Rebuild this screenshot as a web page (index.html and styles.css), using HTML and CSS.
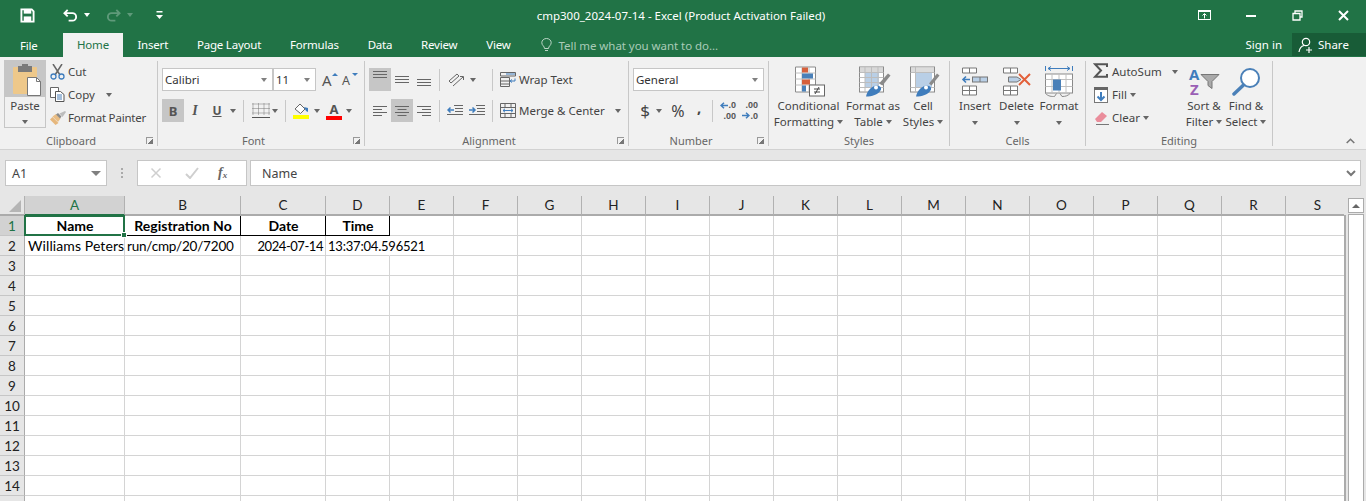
FILE: index.html
```html
<!DOCTYPE html>
<html lang="en">
<head>
<meta charset="utf-8">
<title>cmp300_2024-07-14 - Excel</title>
<link rel="stylesheet" href="styles.css">
</head>
<body>
<div class="app">
  <header class="titlebar">
    <div class="qat">
      <svg class="q-save" width="15" height="15" viewBox="0 0 16 16"><path d="M1.500 1.500h11l2 2v11h-13z" fill="none" stroke="#fff" stroke-width="2"/><rect x="4" y="1" width="8" height="5" fill="#fff"/><rect x="4" y="9" width="8" height="6" fill="#fff"/></svg>
      <svg class="q-undo" width="15" height="14" viewBox="0 0 16 14"><path d="M5 1.500 1.500 5 5 8.500M2 5h8a4 4 0 0 1 0 8H6" fill="none" stroke="#fff" stroke-width="2"/></svg>
      <span class="caret caret-white q-c1"></span>
      <svg class="q-redo" width="15" height="14" viewBox="0 0 16 14"><path d="M11 1.500 14.500 5 11 8.500M14 5H6a4 4 0 0 0 0 8h4" fill="none" stroke="#5f9a7a" stroke-width="2"/></svg>
      <span class="caret caret-dim q-c2"></span>
      <svg class="q-more" width="7" height="9" viewBox="0 0 7 9"><rect x="0.500" y="0" width="6" height="1.500" fill="#fff"/><path d="M0 4h7L3.500 8z" fill="#fff"/></svg>
    </div>
    <div class="doc-title">cmp300_2024-07-14 - Excel (Product Activation Failed)</div>
    <div class="winctl">
      <svg width="13" height="10" viewBox="0 0 13 10"><rect x="0.500" y="0.500" width="12" height="9" fill="none" stroke="#fff"/><rect x="1" y="0.500" width="11" height="1.500" fill="#fff"/><path d="M6.500 8.500V4M4.500 5.500l2-2 2 2" fill="none" stroke="#fff"/></svg>
      <svg class="w-min" width="10" height="2" viewBox="0 0 10 2"><rect width="10" height="2" fill="#fff"/></svg>
      <svg class="w-rest" width="11" height="11" viewBox="0 0 11 11"><path d="M3 3V1h7v6H8M1 3.500h7v6.500H1z" fill="none" stroke="#fff" stroke-width="1.300"/></svg>
      <svg class="w-close" width="11" height="11" viewBox="0 0 11 11"><path d="M1 1l9 9M10 1l-9 9" stroke="#fff" stroke-width="2"/></svg>
    </div>
  </header>

  <nav class="tabs">
    <span class="tab tab-file">File</span>
    <span class="tab tab-active">Home</span>
    <span class="tab">Insert</span>
    <span class="tab">Page Layout</span>
    <span class="tab">Formulas</span>
    <span class="tab">Data</span>
    <span class="tab">Review</span>
    <span class="tab">View</span>
    <span class="tellme">
      <svg width="11" height="14" viewBox="0 0 11 14"><path d="M3.500 10.500C3.500 8 .8 7.500.8 4.700a4.700 4.200 0 0 1 9.400 0C10.200 7.500 7.500 8 7.500 10.500zM4 12.500h3" fill="none" stroke="#bcd6c7"/></svg>
      Tell me what you want to do...
    </span>
    <span class="signin">Sign in</span>
    <span class="share">
      <svg width="16" height="16" viewBox="0 0 16 16"><circle cx="8" cy="5" r="3.700" fill="none" stroke="#fff" stroke-width="1.200"/><path d="M1 15c.5-3.500 2.500-6 5-6.500M11 10v6M8 13h6" fill="none" stroke="#fff" stroke-width="1.200"/></svg>
      Share
    </span>
  </nav>

  <section class="ribbon">
    <div class="group g-clip launch">
      <div class="g-body clip-body">
        <div class="paste">
          <div class="paste-top">
            <svg width="30" height="32" viewBox="0 0 30 32"><rect x="1" y="3" width="24" height="27" rx="1" fill="#eec88a"/><rect x="6" y="2" width="14" height="6" fill="#7a7a7a"/><rect x="10" y="0" width="6" height="3" fill="#7a7a7a"/><path d="M15.500 13.500h9l4 4v14h-13z" fill="#fff" stroke="#777"/><path d="M24.500 13.500v4h4" fill="none" stroke="#777"/></svg>
          </div>
          <div class="paste-bottom"><span>Paste</span><span class="caret"></span></div>
        </div>
        <div class="small-col">
          <div class="small-row">
            <svg width="15" height="16" viewBox="0 0 15 16"><path d="M3 0l7 11M12 0 5 11" stroke="#666" stroke-width="1.500" fill="none"/><circle cx="3.500" cy="12.500" r="2.500" fill="none" stroke="#3f7dbd" stroke-width="1.300"/><circle cx="11.500" cy="12.500" r="2.500" fill="none" stroke="#3f7dbd" stroke-width="1.300"/></svg>
            <span class="lbl-cut">Cut</span>
          </div>
          <div class="small-row">
            <svg width="15" height="15" viewBox="0 0 15 15"><path d="M.5.500h8v10h-8z" fill="#fff" stroke="#666"/><path d="M5.500 4.500h5l3.500 3v7H5.500z" fill="#fff" stroke="#555"/><path d="M7 8h5M7 10h5M7 12h5" stroke="#4a7fb8"/></svg>
            <span class="lbl-cut">Copy</span><span class="caret copy-caret"></span>
          </div>
          <div class="small-row">
            <svg width="16" height="14" viewBox="0 0 16 14"><path d="M0 8.500 2.500 6l6 6-3 2z" fill="#e6b77c"/><path d="M2.500 5.500 6 3l4.500 4.500L8 11z" fill="#e9bd84"/><path d="M6 3.500 8 2l3.500 3.500L10 7.500z" fill="#8a8a8a"/><path d="M9.500 2.500 15 0l1 1-3.500 5z" fill="#bcbcbc"/></svg>
            <span class="lbl-fp">Format Painter</span>
          </div>
        </div>
      </div>
      <div class="g-label">Clipboard</div>
      <span class="launcher"></span>
    </div>

    <div class="group g-font launch">
      <div class="g-body rows">
        <div class="r-row">
          <div class="combo combo-font"><span>Calibri</span><span class="caret"></span></div>
          <div class="combo combo-size"><span>11</span><span class="caret"></span></div>
          <span class="grow-a">A<i class="tri-up"></i></span>
          <span class="shrink-a">A<i class="tri-down"></i></span>
        </div>
        <div class="r-row">
          <span class="fbtn fbtn-on f-b">B</span>
          <span class="fbtn f-i">I</span>
          <span class="fbtn f-u">U</span>
          <span class="caret cr-u"></span>
          <i class="vsep sep-u"></i>
          <svg class="ic-border" width="18" height="16" viewBox="0 0 18 16"><path d="M.5 1h17M.5 5.500h17M.5 10h17M1 .5v11M6.500.5v11M12 .5v11M17 .5v11" stroke="#777" stroke-dasharray="1 1" fill="none"/><path d="M0 14.500h18" stroke="#555"/></svg>
          <span class="caret cr-b"></span>
          <i class="vsep sep-b"></i>
          <svg class="ic-fill" width="17" height="17" viewBox="0 0 17 17"><path d="M2 7l5-5 5 5-4.500 4.500z" fill="#fff" stroke="#666"/><path d="M11 5l4 1v4l-2-1z" fill="#3f7dbd"/><rect y="13" width="16" height="4" fill="#ffff00"/></svg>
          <span class="caret cr-f"></span>
          <span class="ic-color">A</span>
          <span class="caret cr-c"></span>
        </div>
      </div>
      <div class="g-label">Font</div>
      <span class="launcher"></span>
    </div>

    <div class="group g-align launch">
      <div class="g-body rows">
        <div class="r-row">
          <span class="abtn abtn-on abtn-top"><svg width="14" height="8" viewBox="0 0 14 8"><path d="M0 .5h14M0 3.500h14M0 6.500h14" stroke="#666"/></svg></span>
          <span class="abtn"><svg width="14" height="8" viewBox="0 0 14 8"><path d="M0 .5h14M0 3.500h14M0 6.500h14" stroke="#666"/></svg></span>
          <span class="abtn abtn-low"><svg width="14" height="8" viewBox="0 0 14 8"><path d="M0 .5h14M0 3.500h14M0 6.500h14" stroke="#666"/></svg></span>
          <i class="vsep sep-a1"></i>
          <span class="orient"><svg width="18" height="15" viewBox="0 0 18 15"><path d="M2 9l8-7 2 2-8 7z" fill="none" stroke="#666"/><path d="M6 14 16 5M13 4.500l3.500 0V8" fill="none" stroke="#666"/></svg><span class="caret"></span></span>
          <i class="vsep"></i>
          <span class="wide-btn">
            <svg width="16" height="15" viewBox="0 0 16 15"><path d="M.5.500h15v3.500H.5zM.5 5.500h9v9H.5zM.5 9h9M.5 12h9" fill="none" stroke="#666"/><path d="M15 6.500v2.500H10.500M12 7.500 10 9l2 1.500" fill="none" stroke="#3f7dbd"/><path d="M6 2h9" stroke="#3f7dbd"/></svg>
            Wrap Text
          </span>
        </div>
        <div class="r-row">
          <span class="abtn"><svg width="14" height="10" viewBox="0 0 14 10"><path d="M0 .5h14M0 3.500h9M0 6.500h14M0 9.500h9" stroke="#666"/></svg></span>
          <span class="abtn abtn-on"><svg width="14" height="10" viewBox="0 0 14 10"><path d="M0 .5h14M2.500 3.500h9M0 6.500h14M2.500 9.500h9" stroke="#666"/></svg></span>
          <span class="abtn"><svg width="14" height="10" viewBox="0 0 14 10"><path d="M0 .5h14M5 3.500h9M0 6.500h14M5 9.500h9" stroke="#666"/></svg></span>
          <i class="vsep sep-a1"></i>
          <span class="indent ind-first"><svg width="16" height="11" viewBox="0 0 16 11"><path d="M7 .5h9M8 3.500h8M8 6.500h8M0 9.500h16" stroke="#666"/><path d="M7 5H1M3.500 2.500 1 5l2.500 2.500" fill="none" stroke="#3f7dbd" stroke-width="1.500"/></svg></span>
          <span class="indent"><svg width="16" height="11" viewBox="0 0 16 11"><path d="M7 .5h9M8 3.500h8M8 6.500h8M0 9.500h16" stroke="#666"/><path d="M0 5h6M3.500 2.500 6 5 3.500 7.500" fill="none" stroke="#3f7dbd" stroke-width="1.500"/></svg></span>
          <i class="vsep"></i>
          <span class="wide-btn">
            <svg width="16" height="15" viewBox="0 0 16 15"><path d="M.5.500h15v14H.5zM.5 4.500h15M.5 10.500h15M5 .5v4M11 .5v4M5 10.500v4M11 10.500v4" fill="none" stroke="#666"/><path d="M3 7.500h10M5 5.800 3 7.500l2 1.700M11 5.800l2 1.700-2 1.700" fill="none" stroke="#3f7dbd"/></svg>
            Merge &amp; Center<span class="caret cr-merge"></span>
          </span>
        </div>
      </div>
      <div class="g-label">Alignment</div>
      <span class="launcher"></span>
    </div>

    <div class="group g-num launch">
      <div class="g-body rows">
        <div class="r-row">
          <div class="combo combo-num"><span>General</span><span class="caret"></span></div>
        </div>
        <div class="r-row num-row">
          <span class="n-dollar">$</span><span class="caret cr-d"></span>
          <span class="n-pct">%</span>
          <span class="n-comma">,</span>
          <i class="vsep sep-n"></i>
          <span class="dec"><span>.0</span><span>.00</span><svg class="dec-arrow" width="8" height="7" viewBox="0 0 8 7"><path d="M8 3.500H1M4 .8 1 3.500l3 2.700" fill="none" stroke="#3f7dbd" stroke-width="1.500"/></svg></span>
          <span class="dec dec2"><span>.00</span><span>.0</span><svg class="dec-arrow da-r" width="8" height="7" viewBox="0 0 8 7"><path d="M0 3.500h7M4 .8l3 2.700-3 2.700" fill="none" stroke="#3f7dbd" stroke-width="1.500"/></svg></span>
        </div>
      </div>
      <div class="g-label">Number</div>
      <span class="launcher"></span>
    </div>

    <div class="group g-styles">
      <div class="g-body large-row">
        <div class="large b-cf">
          <svg width="30" height="30" viewBox="0 0 30 30"><path d="M.5.500h20v25H.5z" fill="#fff" stroke="#8a8a8a"/><path d="M7 .5v25M14 .5v25M.5 6.500h20M.5 12.500h20M.5 18.500h20" stroke="#c0c0c0"/><rect x="7" y="1" width="6" height="5" fill="#d5603c"/><rect x="7" y="7" width="11" height="5" fill="#4a80b8"/><rect x="7" y="13" width="8" height="5" fill="#d5603c"/><rect x="7" y="19" width="4" height="6" fill="#4a80b8"/><rect x="14.500" y="18.500" width="15" height="11" fill="#fff" stroke="#666"/><path d="M19 22.500h6M19 25.500h6M24 20.500l-4 7" stroke="#444" fill="none"/></svg>
          <span>Conditional</span>
          <span>Formatting<i class="caret c-in"></i></span>
        </div>
        <div class="large b-ft">
          <svg width="32" height="30" viewBox="0 0 32 30"><rect x=".5" y=".5" width="24" height="25" fill="#fff" stroke="#8a8a8a"/><rect x="1" y="1" width="23" height="5" fill="#d8d8d8"/><rect x="6" y="6" width="14" height="15" fill="#b9cfe6"/><path d="M6 .5v25M12.500 .5v25M19 .5v25M.5 6h24M.5 11h24M.5 16h24M.5 21h24" stroke="#bdbdbd"/><path d="M20 17 29 7l2.500 2-8 10z" fill="#8a8a8a"/><path d="M7 30c1-5 5-10 10-11 5 0 6 3 4.500 5C19 28 13 30 7 30z" fill="#3f7dbd"/><circle cx="17" cy="21" r="2" fill="#fff"/></svg>
          <span>Format as</span>
          <span>Table<i class="caret c-in"></i></span>
        </div>
        <div class="large b-cs">
          <svg width="30" height="30" viewBox="0 0 30 30"><rect x=".5" y=".5" width="24" height="25" fill="#fff" stroke="#8a8a8a"/><rect x="1" y="1" width="23" height="5" fill="#dcdcdc"/><rect x="6" y="6" width="16" height="15" fill="#b9cfe6"/><path d="M5.500 .5v25M.5 6h24M.5 21h24" stroke="#bdbdbd"/><path d="M19 17 27 7l2.500 2-8 10z" fill="#8a8a8a"/><path d="M6 30c1-5 5-10 10-11 5 0 6 3 4.500 5C18 28 12 30 6 30z" fill="#3f7dbd"/><circle cx="16" cy="21" r="2" fill="#fff"/></svg>
          <span>Cell</span>
          <span>Styles<i class="caret c-in"></i></span>
        </div>
      </div>
      <div class="g-label">Styles</div>
    </div>

    <div class="group g-cells">
      <div class="g-body large-row">
        <div class="large b-ins">
          <svg width="28" height="28" viewBox="0 0 28 28"><path d="M1.500.500h14v5h-14zM8.500.5v5M1.500 18.500h14v9h-14zM1.500 23h14M8.500 18.500v9" fill="#fff" stroke="#777"/><rect x="11.500" y="9.500" width="15" height="5" fill="#b9cfe6" stroke="#777"/><path d="M19 9.500v5" stroke="#777"/><path d="M9 12H2M5 9 2 12l3 3" fill="none" stroke="#3f7dbd" stroke-width="1.600"/></svg>
          <span>Insert</span>
          <span class="caret c-big"></span>
        </div>
        <div class="large b-del">
          <svg width="30" height="28" viewBox="0 0 30 28"><path d="M1.500.500h14v5h-14zM8.500.5v5M1.500 18.500h14v9h-14zM1.500 23h14M8.500 18.500v9" fill="#fff" stroke="#777"/><path d="M6.500 9.500h8.500l4 2.500-4 2.500H6.500z" fill="#b9cfe6" stroke="#777"/><path d="M17 6.500l11 11M28 6.500l-11 11" stroke="#e3603a" stroke-width="2"/></svg>
          <span>Delete</span>
          <span class="caret c-big"></span>
        </div>
        <div class="large b-fmt">
          <svg width="28" height="32" viewBox="0 0 28 32"><path d="M.5.500v5M27.500.5v5M3 3h22M6 1 3 3l3 2M22 1l3 2-3 2" fill="none" stroke="#3f7dbd"/><rect x=".5" y="8.500" width="27" height="19" fill="#fff" stroke="#8a8a8a"/><path d="M7 8.500v19M14 8.500v19M21 8.500v19M.5 14h27M.5 21h27" stroke="#c0c0c0"/><rect x="8" y="14" width="8" height="11" fill="#4a80b8"/><path d="M.5 28c3 3 6 3 9 3l2-3M15 28l2 3c4 0 6-1 8-3" fill="none" stroke="#8a8a8a"/></svg>
          <span>Format</span>
          <span class="caret c-big"></span>
        </div>
      </div>
      <div class="g-label">Cells</div>
    </div>

    <div class="group g-edit">
      <div class="g-body clip-body">
        <div class="small-col edit-col">
          <div class="small-row">
            <svg class="sigma" width="15" height="15" viewBox="0 0 15 15"><path d="M14 4V1.200H2L8 7.500 2 13.800h12V11" fill="none" stroke="#555" stroke-width="2"/></svg>
            <span>AutoSum</span><span class="caret cr-as"></span>
          </div>
          <div class="small-row">
            <svg width="15" height="16" viewBox="0 0 15 16"><rect x=".5" y=".5" width="13" height="15" fill="#fff" stroke="#777"/><rect x="0" y="0" width="14" height="3" fill="#666"/><path d="M7 5v8M3.500 9.500 7 13l3.500-3.500" fill="none" stroke="#3f7dbd" stroke-width="2"/></svg>
            <span>Fill</span><span class="caret c-in2"></span>
          </div>
          <div class="small-row">
            <svg width="15" height="14" viewBox="0 0 15 14"><path d="M1 8l7-7 5 4-6 6H3z" fill="#ea8d9b"/><path d="M2 13.500h13" stroke="#777"/></svg>
            <span>Clear</span><span class="caret c-in2"></span>
          </div>
        </div>
        <div class="large b-sort">
          <svg width="32" height="30" viewBox="0 0 32 30"><text x="1" y="13" class="sort-a">A</text><text x="2" y="28" class="sort-z">Z</text><path d="M13 8h18l-7 7v7l-4-3v-4z" fill="#aaa" stroke="#777"/></svg>
          <span>Sort &amp;</span>
          <span>Filter<i class="caret c-in"></i></span>
        </div>
        <div class="large b-find">
          <svg width="29" height="29" viewBox="0 0 29 29"><circle cx="18" cy="11" r="9" fill="#fff" stroke="#4a80b8" stroke-width="2"/><path d="M11.500 18 2 27" stroke="#4a80b8" stroke-width="3.500" stroke-linecap="round"/></svg>
          <span>Find &amp;</span>
          <span>Select<i class="caret c-in"></i></span>
        </div>
      </div>
      <div class="g-label">Editing</div>
    </div>

    <div class="collapse-wrap">
      <svg width="9" height="6" viewBox="0 0 9 6"><path d="M.7 5 4.500 1.300 8.300 5" fill="none" stroke="#777" stroke-width="1.600"/></svg>
    </div>
  </section>

  <section class="formula">
    <div class="namebox"><span>A1</span><span class="caret caret-grey"></span></div>
    <div class="fdots"><i></i><i></i><i></i></div>
    <div class="fxbox">
      <svg width="12" height="12" viewBox="0 0 12 12"><path d="M1.500 1.500l9 9M10.500 1.500l-9 9" stroke="#cfcfcf" stroke-width="1.500"/></svg>
      <svg width="14" height="12" viewBox="0 0 14 12"><path d="M1 7l4 4 8-10" fill="none" stroke="#cfcfcf" stroke-width="2"/></svg>
      <span class="fx">f<sub>x</sub></span>
    </div>
    <div class="finput">
      <span>Name</span>
      <svg width="10" height="7" viewBox="0 0 10 7"><path d="M1 1l4 4 4-4" fill="none" stroke="#777" stroke-width="2"/></svg>
    </div>
  </section>

  <section class="sheet">
    <div class="sheet-clip">
      <table class="grid">
        <colgroup>
          <col class="col-rh"><col class="col-a"><col class="col-b"><col class="col-c"><col class="col-std"><col class="col-std"><col class="col-std"><col class="col-std"><col class="col-std"><col class="col-std"><col class="col-std"><col class="col-std"><col class="col-std"><col class="col-std"><col class="col-std"><col class="col-std"><col class="col-std"><col class="col-std"><col class="col-std"><col class="col-std">
        </colgroup>
        <thead>
          <tr><th class="corner"><i class="corner-tri"></i></th><th class="ch ch-sel">A</th><th class="ch">B</th><th class="ch">C</th><th class="ch">D</th><th class="ch">E</th><th class="ch">F</th><th class="ch">G</th><th class="ch">H</th><th class="ch">I</th><th class="ch">J</th><th class="ch">K</th><th class="ch">L</th><th class="ch">M</th><th class="ch">N</th><th class="ch">O</th><th class="ch">P</th><th class="ch">Q</th><th class="ch">R</th><th class="ch">S</th></tr>
        </thead>
        <tbody>
          <tr><th class="rh rh-sel">1</th><td class="hd sel">Name<i class="handle"></i></td><td class="hd">Registration No</td><td class="hd">Date</td><td class="hd">Time</td><td></td><td></td><td></td><td></td><td></td><td></td><td></td><td></td><td></td><td></td><td></td><td></td><td></td><td></td><td></td></tr>
          <tr><th class="rh">2</th><td class="t-name">Williams Peters</td><td class="t-reg">run/cmp/20/7200</td><td class="num">2024-07-14</td><td class="spill">13:37:04.596521</td><td></td><td></td><td></td><td></td><td></td><td></td><td></td><td></td><td></td><td></td><td></td><td></td><td></td><td></td><td></td></tr>
          <tr><th class="rh">3</th><td></td><td></td><td></td><td></td><td></td><td></td><td></td><td></td><td></td><td></td><td></td><td></td><td></td><td></td><td></td><td></td><td></td><td></td><td></td></tr>
          <tr><th class="rh">4</th><td></td><td></td><td></td><td></td><td></td><td></td><td></td><td></td><td></td><td></td><td></td><td></td><td></td><td></td><td></td><td></td><td></td><td></td><td></td></tr>
          <tr><th class="rh">5</th><td></td><td></td><td></td><td></td><td></td><td></td><td></td><td></td><td></td><td></td><td></td><td></td><td></td><td></td><td></td><td></td><td></td><td></td><td></td></tr>
          <tr><th class="rh">6</th><td></td><td></td><td></td><td></td><td></td><td></td><td></td><td></td><td></td><td></td><td></td><td></td><td></td><td></td><td></td><td></td><td></td><td></td><td></td></tr>
          <tr><th class="rh">7</th><td></td><td></td><td></td><td></td><td></td><td></td><td></td><td></td><td></td><td></td><td></td><td></td><td></td><td></td><td></td><td></td><td></td><td></td><td></td></tr>
          <tr><th class="rh">8</th><td></td><td></td><td></td><td></td><td></td><td></td><td></td><td></td><td></td><td></td><td></td><td></td><td></td><td></td><td></td><td></td><td></td><td></td><td></td></tr>
          <tr><th class="rh">9</th><td></td><td></td><td></td><td></td><td></td><td></td><td></td><td></td><td></td><td></td><td></td><td></td><td></td><td></td><td></td><td></td><td></td><td></td><td></td></tr>
          <tr><th class="rh">10</th><td></td><td></td><td></td><td></td><td></td><td></td><td></td><td></td><td></td><td></td><td></td><td></td><td></td><td></td><td></td><td></td><td></td><td></td><td></td></tr>
          <tr><th class="rh">11</th><td></td><td></td><td></td><td></td><td></td><td></td><td></td><td></td><td></td><td></td><td></td><td></td><td></td><td></td><td></td><td></td><td></td><td></td><td></td></tr>
          <tr><th class="rh">12</th><td></td><td></td><td></td><td></td><td></td><td></td><td></td><td></td><td></td><td></td><td></td><td></td><td></td><td></td><td></td><td></td><td></td><td></td><td></td></tr>
          <tr><th class="rh">13</th><td></td><td></td><td></td><td></td><td></td><td></td><td></td><td></td><td></td><td></td><td></td><td></td><td></td><td></td><td></td><td></td><td></td><td></td><td></td></tr>
          <tr><th class="rh">14</th><td></td><td></td><td></td><td></td><td></td><td></td><td></td><td></td><td></td><td></td><td></td><td></td><td></td><td></td><td></td><td></td><td></td><td></td><td></td></tr>
          <tr><th class="rh"></th><td></td><td></td><td></td><td></td><td></td><td></td><td></td><td></td><td></td><td></td><td></td><td></td><td></td><td></td><td></td><td></td><td></td><td></td><td></td></tr>
        </tbody>
      </table>
    </div>
    <div class="edge"></div>
    <div class="vscroll">
      <div class="vs-btn"><span class="tri-scroll"></span></div>
      <div class="vs-track"></div>
    </div>
  </section>
</div>
</body>
</html>
```

FILE: styles.css
```css
* { box-sizing: border-box; }
html, body { margin: 0; padding: 0; height: 100%; overflow: hidden; }
body { font-family: "Noto Sans", "Liberation Sans", sans-serif; font-size: 11.5px; color: #444; background: #e6e6e6; }
i { font-style: normal; }
svg { display: block; flex: none; }

.app { width: 1366px; height: 501px; overflow: hidden; display: flex; flex-direction: column; }

/* Title bar */
.titlebar { height: 33px; background: #217346; display: grid; grid-template-columns: 420px 1fr 420px; color: #fff; flex: none; }
.qat { display: flex; align-items: center; padding-left: 20px; padding-bottom: 3px; }
.q-undo { margin-left: 28px; }
.q-c1 { margin-left: 6px; }
.q-redo { margin-left: 16px; }
.q-c2 { margin-left: 6px; }
.q-more { margin-left: 23px; }
.doc-title { text-align: center; line-height: 32px; font-size: 11.5px; padding-right: 4px; }
.winctl { display: flex; align-items: center; padding-left: 252px; padding-bottom: 3px; }
.w-min { margin-left: 35px; margin-top: 2px; }
.w-rest { margin-left: 36px; }
.w-close { margin-left: 35px; }

.caret { display: inline-block; width: 0; height: 0; border-left: 3.5px solid transparent; border-right: 3.5px solid transparent; border-top: 4px solid #666; flex: none; }
.caret-white { border-top-color: #fff; }
.caret-dim { border-top-color: #5f9a7a; }
.caret-grey { border-top-color: #808080; border-left-width: 5px; border-right-width: 5px; border-top-width: 5px; }

/* Tabs */
.tabs { height: 24px; background: #217346; color: #fff; display: flex; align-items: stretch; flex: none; line-height: 23px; font-size: 11.5px; }
.tab { padding: 0 14.4px; white-space: nowrap; letter-spacing: -0.2px; }
.tab-file { width: 63px; padding: 0; padding-left: 20px; line-height: 25px; }
.tab-active { width: 60px; padding: 0; text-align: center; background: #f1f1f1; color: #217346; }
.tellme { display: flex; align-items: center; gap: 7px; margin-left: 15.6px; color: #a9cbb8; letter-spacing: -0.05px; }
.signin { margin-left: auto; padding-right: 10px; }
.share { width: 74px; height: 23px; background: #185c37; display: flex; align-items: center; gap: 4px; padding-left: 6px; }

/* Ribbon */
.ribbon { height: 93px; flex: none; background: #f1f1f1; border-bottom: 1px solid #d2d2d2; display: flex; padding-top: 4px; }
.group { position: relative; height: 85px; display: flex; flex-direction: column; border-right: 1px solid #c8c8c8; flex: none; }
.g-body { height: 74px; flex: none; }
.g-label { text-align: center; line-height: 12px; color: #666; font-size: 11px; }
.launch .g-label { padding-right: 15px; }
.launcher { position: absolute; right: 4px; bottom: 2px; width: 7px; height: 7px; border-left: 1px solid #999; border-top: 1px solid #999; background: linear-gradient(135deg, transparent 55%, #777 55%); }

.g-clip { width: 158px; }
.g-font { width: 207px; }
.g-align { width: 264px; }
.g-num { width: 140px; }
.g-styles { width: 181px; }
.g-cells { width: 136px; }
.g-edit { width: 187px; }
.collapse-wrap { flex: 1; display: flex; justify-content: flex-end; align-items: flex-end; padding: 0 11px 0 0; height: 83px; }

.clip-body { display: flex; padding-left: 4px; margin-top: -1px; height: 75px; }
.paste { width: 42px; height: 68px; display: flex; flex-direction: column; }
.paste-top { height: 37px; background: #c6c6c6; padding: 4px 0 0 8px; }
.paste-bottom { flex: 1; border: 1px solid #c6c6c6; border-top: 0; display: flex; flex-direction: column; align-items: center; line-height: 18px; gap: 5px; }
.small-col { display: flex; flex-direction: column; margin-left: 4px; }
.small-row { height: 23px; display: flex; align-items: center; white-space: nowrap; }
.lbl-cut { margin-left: 3px; }
.lbl-fp { margin-left: 2px; letter-spacing: -0.2px; }
.copy-caret { margin-left: 11px; }

.rows { padding: 7px 0 0 4px; display: flex; flex-direction: column; gap: 8px; }
.r-row { height: 23px; display: flex; align-items: center; white-space: nowrap; }

.combo { height: 23px; background: #fff; border: 1px solid #c6c6c6; display: flex; align-items: center; justify-content: space-between; padding: 0 5px 0 2px; color: #333; }
.combo-font { width: 111px; }
.combo-size { width: 43px; }
.combo-num { width: 131px; }
.combo .caret { border-top-color: #808080; }

.grow-a, .shrink-a { position: relative; font-family: "Noto Sans", sans-serif; color: #555; display: inline-block; }
.grow-a { margin-left: 6px; font-size: 15px; width: 20px; }
.shrink-a { font-size: 12.5px; width: 16px; padding-top: 2px; }
.tri-up, .tri-down { position: absolute; top: 3px; left: 10px; width: 0; height: 0; border-left: 3px solid transparent; border-right: 3px solid transparent; }
.tri-up { border-bottom: 3px solid #3f7dbd; }
.tri-down { border-top: 3px solid #3f7dbd; }

.fbtn { width: 22px; height: 23px; display: flex; align-items: center; justify-content: center; font-family: "Liberation Serif", serif; color: #555; font-size: 14px; flex: none; }
.fbtn-on { background: #c6c6c6; }
.f-b { font-family: "Noto Sans", sans-serif; font-weight: 700; font-size: 13px; }
.f-i { font-style: italic; font-weight: 700; }
.f-u { font-family: "Noto Sans", sans-serif; font-weight: 700; text-decoration: underline; font-size: 12px; }
.cr-u { margin-left: 2px; }
.vsep { display: block; width: 1px; height: 22px; background: #c8c8c8; flex: none; }
.sep-u { margin-left: 7px; }
.ic-border { margin-left: 8px; }
.cr-b { margin-left: 2px; }
.sep-b { margin-left: 7px; }
.ic-fill { margin-left: 7px; }
.cr-f { margin-left: 3.5px; }
.ic-color { margin-left: 6.5px; width: 16px; text-align: center; font-weight: 700; font-size: 13px; line-height: 14px; color: #555; border-bottom: 4px solid #ff0000; }
.cr-c { margin-left: 4px; }

.abtn { width: 22px; height: 23px; display: flex; align-items: center; justify-content: center; flex: none; }
.abtn-on { background: #c6c6c6; }
.abtn-low { padding-top: 6px; }
.abtn-top { align-items: flex-start; padding-top: 3px; }
.sep-a1 { margin-left: 4px; }
.orient { display: flex; align-items: center; gap: 5px; margin-left: 7px; width: 45px; }
.indent { width: 22px; display: flex; justify-content: flex-start; flex: none; }
.ind-first { margin-left: 7px; }
.indent + .vsep { margin-left: 1px; }
.wide-btn { display: flex; align-items: center; gap: 3px; margin-left: 7px; }
.cr-merge { margin-left: 7px; }

.num-row { padding-left: 7px; }
.n-dollar { font-size: 17px; width: 10px; text-align: center; }
.cr-d { margin-left: 6px; }
.n-pct { font-size: 16px; margin-left: 8px; width: 16px; text-align: center; }
.n-comma { font-size: 15px; font-weight: 700; margin-left: 11px; width: 5px; line-height: 18px; padding-bottom: 7px; }
.sep-n { margin-left: 10px; }
.dec { position: relative; width: 16px; height: 21px; margin-left: 7px; display: flex; flex-direction: column; align-items: flex-end; font-family: "Liberation Sans", sans-serif; font-size: 9px; line-height: 10.5px; font-weight: 700; color: #555; flex: none; }
.dec2 { margin-left: 6px; }
.dec-arrow { position: absolute; top: 2px; left: 0; }
.da-r { top: 12px; }

.large-row { display: flex; }
.large { display: flex; flex-direction: column; align-items: center; line-height: 16px; white-space: nowrap; flex: none; padding-top: 4px; position: relative; }
.large svg { height: 33px; }
.c-in { display: inline-block; margin-left: 3px; vertical-align: 2px; }
.c-big { margin-top: 7px; }
.b-cf { width: 67px; margin-left: 6px; }
.b-cf svg { margin-left: 3px; }
.b-ft { width: 52px; margin-left: 5px; }
.b-ft svg { margin-left: 3px; }
.b-cs { width: 38px; margin-left: 5px; }
.b-cs svg { margin-left: 4px; }
.b-ins { width: 30px; margin-left: 10px; }
.b-del { width: 33px; margin-left: 10px; }
.b-fmt { width: 38px; margin-left: 7px; }
.edit-col { margin-left: 3px; width: 92px; }
.edit-col svg { margin-right: 3px; margin-left: 1px; }
.edit-col svg.sigma { margin: 0 4px 2px 0; }
.cr-as { margin-left: 10px; }
.c-in2 { margin-left: 3px; }
.b-sort { width: 38px; padding-top: 5px; }
.b-find { width: 40px; margin-left: 3px; padding-top: 5px; }
.sort-a { font: 700 15px "Noto Sans", sans-serif; fill: #3f7dbd; }
.sort-z { font: 700 15px "Noto Sans", sans-serif; fill: #9a5fb5; }

/* Formula bar */
.formula { height: 46px; flex: none; background: #e6e6e6; padding: 10px 5px; display: flex; }
.namebox { width: 102px; height: 26px; background: #fff; border: 1px solid #c6c6c6; display: flex; align-items: center; justify-content: space-between; padding: 0 5px 0 6px; font-size: 12.5px; color: #444; }
.fdots { width: 30px; display: flex; flex-direction: column; justify-content: center; align-items: center; gap: 2px; }
.fdots i { width: 2px; height: 2px; background: #aaa; }
.fxbox { width: 110px; height: 26px; background: #fff; border: 1px solid #c6c6c6; display: flex; align-items: center; padding-left: 12px; gap: 23px; }
.fx { font-family: "Liberation Serif", serif; font-style: italic; font-weight: 700; font-size: 14px; color: #666; margin-left: -4px; }
.fx sub { font-size: 9px; vertical-align: -1px; line-height: 0; }
.finput { margin-left: 3px; width: 1111px; height: 26px; background: #fff; border: 1px solid #c6c6c6; display: flex; align-items: center; justify-content: space-between; padding: 0 4px 0 11px; font-size: 12.5px; }

/* Sheet */
.sheet { flex: 1; display: flex; min-height: 0; background: #e6e6e6; }
.sheet-clip { width: 1344px; overflow: hidden; flex: none; }
.grid { border-collapse: separate; border-spacing: 0; table-layout: fixed; width: 1350px; font-family: Lato, "Liberation Sans", sans-serif; font-size: 13.5px; color: #000; background: #fff; }
.col-rh { width: 25px; }
.col-a { width: 100px; }
.col-b { width: 116px; }
.col-c { width: 85px; }
.col-std { width: 64px; }
.grid th, .grid td { padding: 0; height: 20px; overflow: visible; white-space: nowrap; font-weight: 400; }
.corner { background: #e6e6e6; border-right: 1px solid #b1b1b1; border-bottom: 2px solid #ababab; position: relative; }
.corner-tri { position: absolute; right: 3px; bottom: 2px; width: 0; height: 0; border-left: 12px solid transparent; border-bottom: 12px solid #b5b5b5; }
.ch { background: #e6e6e6; border-right: 1px solid #b1b1b1; border-bottom: 2px solid #ababab; color: #222; font-size: 13.5px; text-align: center; }
.ch-sel { background: #d2d2d2; color: #217346; border-bottom-color: #217346; }
.rh { background: #e6e6e6; border-right: 1px solid #ababab; border-bottom: 1px solid #c6c6c6; color: #222; font-size: 13.5px; text-align: center; }
.rh-sel { background: #d2d2d2; color: #217346; }
.grid td { border-right: 1px solid #d4d4d4; border-bottom: 1px solid #d4d4d4; padding: 0 2px 0 3px; font-size: 14px; }
.grid td.hd { font-weight: 700; text-align: center; border-right-color: #000; border-bottom-color: #000; }
.grid td.t-name { letter-spacing: 0.1px; }
.grid td.t-reg { font-size: 13.5px; letter-spacing: -0.2px; padding-left: 2px; }
.grid td.num { text-align: right; font-size: 13px; letter-spacing: -0.45px; }
.grid td.spill { border-right-color: transparent; font-size: 13px; letter-spacing: -0.2px; padding-left: 2px; }
.grid td.sel { position: relative; }
.grid td.sel::after { content: ""; position: absolute; left: -1px; top: -1px; right: -1px; bottom: -1px; border: 2px solid #217346; pointer-events: none; }
.handle { position: absolute; right: -3px; bottom: -3px; width: 6px; height: 6px; background: #217346; border: 1px solid #fff; z-index: 2; }

.edge { width: 2px; background: #ababab; margin-top: 19px; flex: none; }
.vscroll { margin-left: 2px; width: 16px; padding-top: 2px; display: flex; flex-direction: column; flex: none; }
.vs-btn { height: 15px; background: #fff; border: 1px solid #ababab; display: flex; align-items: center; justify-content: center; }
.tri-scroll { width: 0; height: 0; border-left: 4px solid transparent; border-right: 4px solid transparent; border-bottom: 4px solid #666; }
.vs-track { margin-top: 1px; flex: 1; background: #fff; border-left: 1px solid #ababab; border-right: 1px solid #ababab; border-top: 1px solid #ababab; }
```
